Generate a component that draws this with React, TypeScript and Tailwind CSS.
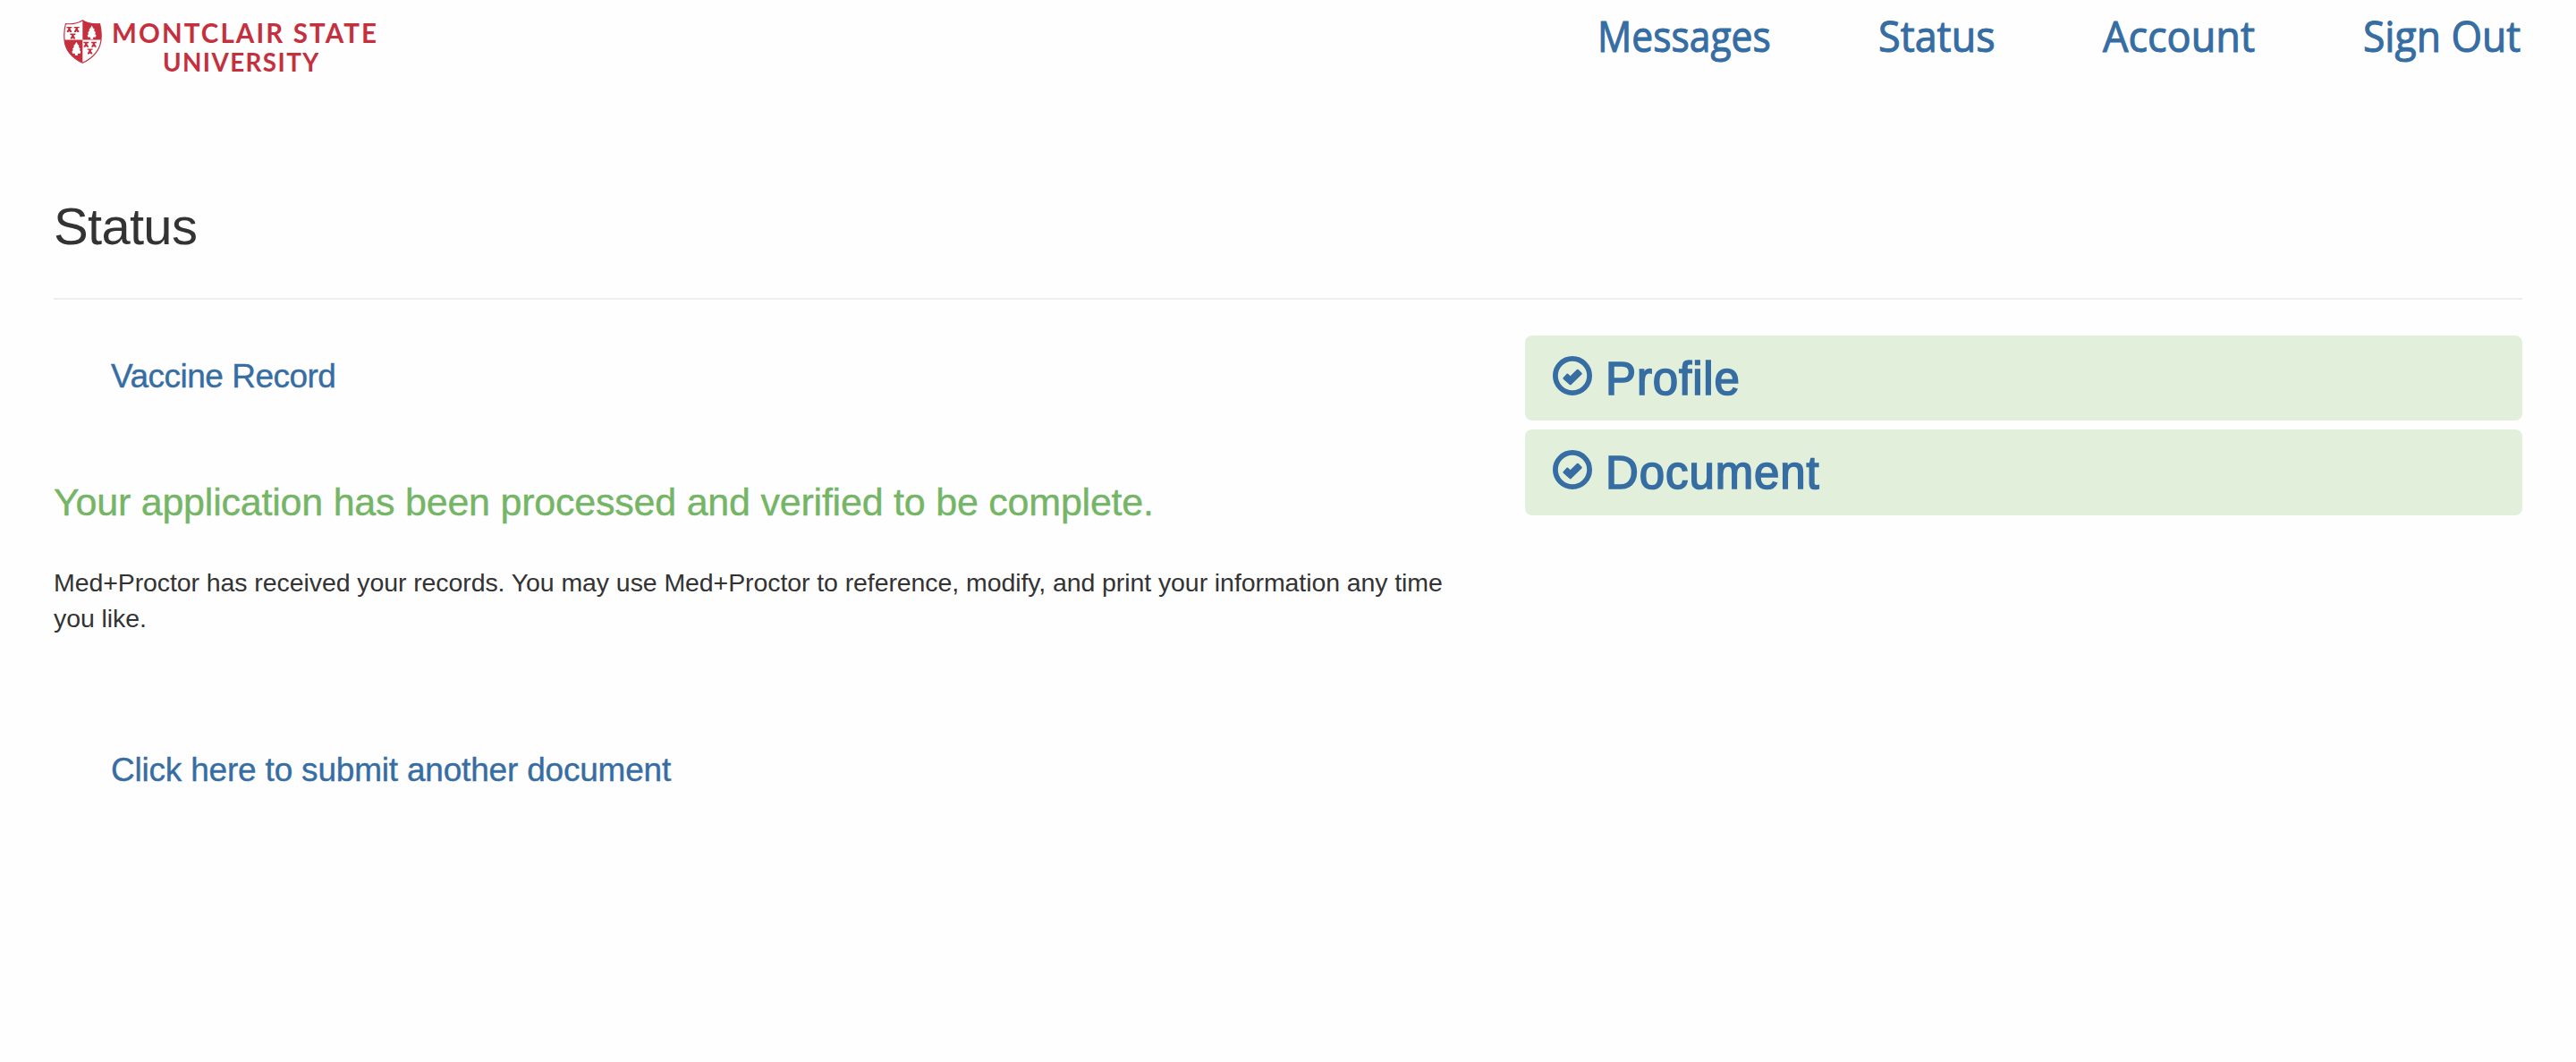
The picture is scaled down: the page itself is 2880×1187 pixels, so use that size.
const NAV = [
  { label: "Messages", box: "w-[194px]", text: "scale-x-[0.887]" },
  { label: "Status", box: "w-[130px]", text: "scale-x-[0.936]" },
  { label: "Account", box: "w-[172px]", text: "ml-px scale-x-[0.938]" },
  { label: "Sign Out", box: "w-[178px]", text: "scale-x-[0.926]" },
];

function Tree({ x, y }: { x: number; y: number }) {
  return (
    <path
      transform={`translate(${x} ${y})`}
      fill="#fff"
      d="M0 -23 L5 -14 L9 -11 L8 -6 L13 0 L11 5 L15 10 L13 16 L4 17 L5 23 L-5 23 L-4 17 L-13 16 L-15 10 L-11 5 L-13 0 L-8 -6 L-9 -11 L-5 -14 Z"
    />
  );
}

function Mill({ x, y }: { x: number; y: number }) {
  return (
    <path
      transform={`translate(${x} ${y})`}
      fill="#c4303e"
      d="M-9 -9 H9 V-5 H4 V0 L8 5 V9 H3 L0 6 L-3 9 H-8 V5 L-4 0 V-5 H-9 Z"
    />
  );
}

function Shield() {
  return (
    <svg viewBox="0 0 129 148" className="mt-[22px] ml-[11px] h-[49px] w-[43px] shrink-0">
      <defs>
        <clipPath id="shield">
          <path d="M64 2 C50 12 26 15 7 14 C2 30 1 52 3 72 C7 104 31 130 64 146 C97 130 121 104 126 72 C128 52 127 30 122 14 C103 15 79 12 64 2 Z" />
        </clipPath>
      </defs>
      <g clipPath="url(#shield)">
        <rect width="129" height="148" fill="#fff" />
        <rect x="64" y="0" width="65" height="68" fill="#c4303e" />
        <rect x="0" y="68" width="64" height="80" fill="#c4303e" />
      </g>
      <path
        d="M64 2 C50 12 26 15 7 14 C2 30 1 52 3 72 C7 104 31 130 64 146 C97 130 121 104 126 72 C128 52 127 30 122 14 C103 15 79 12 64 2 Z"
        fill="none"
        stroke="#c4303e"
        strokeWidth="3.5"
      />
      <Mill x={19} y={33} />
      <Mill x={44} y={33} />
      <Mill x={31} y={56} />
      <Mill x={76} y={84} />
      <Mill x={102} y={84} />
      <Mill x={89} y={107} />
      <Tree x={95} y={43} />
      <Tree x={43} y={98} />
    </svg>
  );
}

function CheckIcon() {
  return (
    <svg viewBox="0 0 44 44" className="mt-[23px] h-[44px] w-[44px] shrink-0" fill="none">
      <circle cx="22" cy="22" r="19.1" stroke="#366da3" strokeWidth="5.8" />
      <path
        d="M11.6 24.3 L15.4 20 Q16.4 19 17.4 20 L19.6 22.2 L27 15 Q28 14.200 29 15.200 L32.4 18.700 Q33.200 19.700 32.400 20.600 L20.600 32 Q19.700 32.800 18.800 32 L11.700 25.700 Q11 25 11.600 24.300 Z"
        fill="#366da3"
      />
    </svg>
  );
}

function Step({ label, height }: { label: string; height: string }) {
  return (
    <a className={`flex gap-[15px] rounded-lg bg-[#e2efda] pl-[31px] ${height}`}>
      <CheckIcon />
      <span className="mt-[19px] text-[51px] leading-[60px] tracking-[0.9px] text-[#366da3] [-webkit-text-stroke:1.6px_#366da3]">
        {label}
      </span>
    </a>
  );
}

export default function App() {
  return (
    <div className="min-h-[1187px] bg-[#fefefe] px-[60px] font-['Liberation_Sans',Arial,sans-serif] text-[#333]">
      <header className="flex h-[221px] justify-between">
        <a className="flex text-[#c4303e]">
          <Shield />
          <div className="ml-[11px] w-[298px] pt-[19px] font-['Lato',sans-serif] font-bold whitespace-nowrap">
            <div className="text-center text-[29.5px] leading-[36px] tracking-[2.1px]">MONTCLAIR STATE</div>
            <div className="-mt-px pl-[57px] text-[27.8px] leading-[32px] tracking-[1.4px]">UNIVERSITY</div>
          </div>
        </a>
        <nav className="flex gap-[120px] pt-[7px] font-['Open_Sans',sans-serif] text-[48px] leading-[66px] font-medium whitespace-nowrap text-[#366da3] [-webkit-text-stroke:1.1px_#366da3]">
          {NAV.map((n) => (
            <a key={n.label} className={n.box}>
              <span className={`inline-block origin-left ${n.text}`}>{n.label}</span>
            </a>
          ))}
        </nav>
      </header>

      <h1 className="text-[58px] leading-[64px] tracking-[-0.7px]">Status</h1>
      <hr className="mt-[48px] border-t-2 border-[#eeeeee]" />

      <main className="mt-[40px] flex justify-between">
        <section className="w-[1585px]">
          <a className="mt-[20px] ml-[64px] block text-[37px] leading-[52px] tracking-[-0.5px] text-[#366da3] [-webkit-text-stroke:0.4px_#366da3]">
            Vaccine Record
          </a>
          <h2 className="mt-[90px] text-[43px] leading-[48px] tracking-[-0.22px] whitespace-nowrap text-[#74b566] [-webkit-text-stroke:0.4px_#74b566]">
            Your application has been processed and verified to be complete.
          </h2>
          <p className="mt-[46px] text-[28.5px] leading-[40px] tracking-[-0.085px]">
            Med+Proctor has received your records. You may use Med+Proctor to reference, modify, and print your
            information any time you like.
          </p>
          <a className="mt-[124px] ml-[64px] block text-[37px] leading-[52px] tracking-[-0.2px] text-[#366da3] [-webkit-text-stroke:0.4px_#366da3]">
            Click here to submit another document
          </a>
        </section>
        <aside className="flex w-[1115px] flex-col gap-[10px]">
          <Step label="Profile" height="h-[95px]" />
          <Step label="Document" height="h-[96px]" />
        </aside>
      </main>
    </div>
  );
}
